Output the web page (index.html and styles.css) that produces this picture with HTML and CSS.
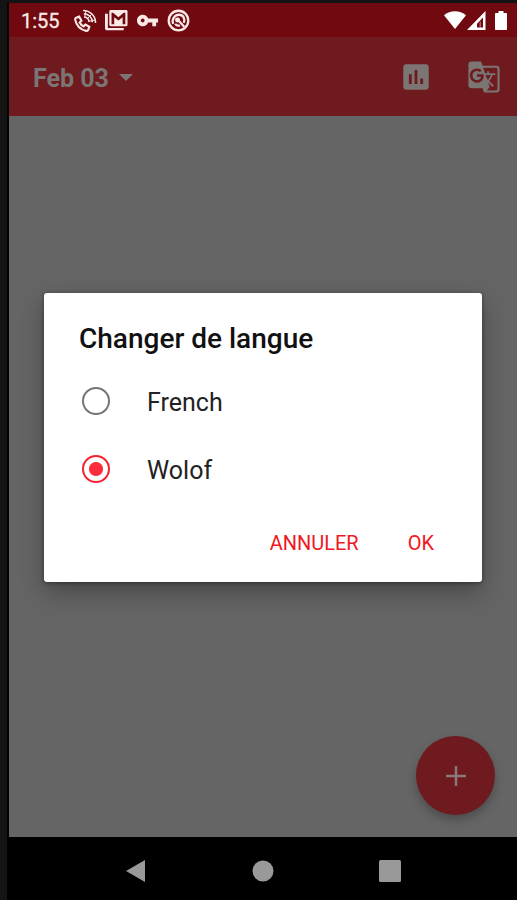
FILE: index.html
```html
<!DOCTYPE html>
<html lang="fr">
<head>
    <meta charset="UTF-8">
    <meta name="viewport" content="width=device-width, initial-scale=1.0">
    <title>Changer de langue</title>
    <link rel="stylesheet" href="styles.css">
</head>
<body>
    <div class="phone">
        <div class="status-bar">
            <span class="clock">1:55</span>
            <div class="notifications">
                <svg class="icon-call" viewBox="0 0 24 24">
                    <path class="line handset" d="M2.200 9.200 5.400 8l2.400 4.200-1.900 1.800c.9 1.800 2.300 3.200 4.100 4.100l1.900-1.900 4.100 2.400-1.200 3.200c-.3.800-1.200 1.200-2.100 1C6.800 21.400 2.400 17 1.300 11.300c-.2-.9.100-1.700.9-2.100z"/>
                    <path class="line" d="M9.500 1.500C16.800 1.500 22.500 7.200 22.500 14.500M10.300 5c5 .2 8.700 3.900 8.900 8.900M10.800 8.400c2.800.4 4.600 2.200 5 5"/>
                    <path class="line thin" d="M12.500 2 11 9M22 11.500l-7 1.500M18.500 5.500l-5 5"/>
                </svg>
                <svg class="icon-mail" viewBox="0 0 24 24">
                    <path d="M3 5H0v15c0 1.300.9 2.200 2.200 2.200H19.500v-2.500H3V5z"/>
                    <path fill-rule="evenodd" d="M6 1h16c.9 0 1.500.6 1.500 1.500v14c0 .9-.6 1.500-1.500 1.500H6c-.9 0-1.500-.6-1.500-1.500v-14C4.500 1.600 5.100 1 6 1zM6.800 4v12h2.800V8.500L14 12l4.400-3.500V16h2.800V4h-1.700L14 8.500 8.500 4z"/>
                </svg>
                <svg class="icon-key" viewBox="0 0 24 24">
                    <path d="M12.650 10C11.830 7.670 9.610 6 7 6c-3.310 0-6 2.690-6 6s2.690 6 6 6c2.610 0 4.830-1.670 5.650-4H17v4h4v-4h2v-4H12.650zM7 14c-1.100 0-2-.9-2-2s.9-2 2-2 2 .9 2 2-.9 2-2 2z"/>
                </svg>
                <svg class="icon-circle" viewBox="0 0 24 24">
                    <circle class="line thick" cx="12" cy="12" r="10.200"/>
                    <path class="line thick" d="M6.500 15.500C4.500 10 8.500 6 12.500 6c4.500 0 6.800 4.500 5 8.500M11 11l7 7.500M8.500 15.500c1.500 2 3.500 2 5 1.500"/>
                    <circle cx="11" cy="11.500" r="2.600"/>
                </svg>
            </div>
            <div class="signals">
                <svg class="icon-wifi" viewBox="0 0 22 18"><path d="M0 4.200C6-1.200 16-1.200 22 4.200L11 18z"/></svg>
                <svg class="icon-cell" viewBox="0 0 20 19"><path fill-rule="evenodd" d="M0 19 18.500 0v19zM10 16.500h6V6.500l-6 6.200z"/><path d="M12.500 11.500 14 10v6.500h-1.500z" opacity=".35"/></svg>
                <svg class="icon-battery" viewBox="0 0 12 19"><path d="M3.500 0h5v2H11c.6 0 1 .4 1 1v15c0 .6-.4 1-1 1H1c-.6 0-1-.4-1-1V3c0-.6.4-1 1-1h2.500z"/></svg>
            </div>
        </div>

        <div class="app-bar">
            <div class="date">Feb 03<span class="caret"></span></div>
            <div class="actions">
                <svg viewBox="0 0 24 24"><path d="M19 3H5c-1.100 0-2 .9-2 2v14c0 1.100.9 2 2 2h14c1.100 0 2-.9 2-2V5c0-1.100-.9-2-2-2zM9 17H7v-7h2v7zm4 0h-2V7h2v10zm4 0h-2v-4h2v4z"/></svg>
                <svg viewBox="0 0 24 24"><path d="M21 4H11l-1-3H3c-1.100 0-2 .9-2 2v15c0 1.100.9 2 2 2h8l1 3h9c1.100 0 2-.9 2-2V6c0-1.100-.9-2-2-2zM7 16c-2.760 0-5-2.240-5-5s2.240-5 5-5c1.350 0 2.480.5 3.350 1.300L9.030 8.570c-.38-.36-1.040-.78-2.030-.78-1.740 0-3.150 1.440-3.150 3.210S5.260 14.210 7 14.210c2.010 0 2.840-1.440 2.920-2.410v.01H7v-1.710h4.680c.07.31.12.61.12 1.020C11.800 13.970 9.890 16 7 16zm6.170-5.420h3.700c-.43 1.250-1.110 2.430-2.050 3.470-.31-.35-.6-.72-.86-1.100l-.79-2.370zm8.330 9.920c0 .55-.45 1-1 1H14l2-2.500-1.040-3.100 3.100 3.100.92-.92-3.300-3.250.02-.02c1.130-1.250 1.930-2.690 2.400-4.220H20v-1.300h-4.530V8h-1.290v1.290h-1.440L11.460 5.500h9.040c.55 0 1 .45 1 1v14z"/></svg>
            </div>
        </div>

        <div class="content">
            <div class="dialog">
                <div class="dialog-title">Changer de langue</div>
                <div class="option">
                    <span class="radio"></span>
                    <span class="label">French</span>
                </div>
                <div class="option">
                    <span class="radio checked"></span>
                    <span class="label">Wolof</span>
                </div>
                <div class="buttons">
                    <span class="btn">ANNULER</span>
                    <span class="btn">OK</span>
                </div>
            </div>
            <div class="fab">
                <svg viewBox="0 0 20 20"><path d="M0 10h20M10 0v20"/></svg>
            </div>
        </div>

        <div class="nav-bar">
            <svg viewBox="0 0 22 24"><path d="M1 12 20 1v22z"/></svg>
            <svg viewBox="0 0 22 24"><circle cx="11" cy="12" r="10.500"/></svg>
            <svg viewBox="0 0 22 24"><rect y="1" width="22" height="22" rx="1.500"/></svg>
        </div>
    </div>
</body>
</html>
```
FILE: styles.css
```css
*{padding: 0;margin: 0;box-sizing: border-box;}
html,body{
    width: 100%;
    height: 100%;
}
body{
    overflow: hidden;
    background-color: #141414;
    font-family: Roboto, "Liberation Sans", sans-serif;
}
svg{
    display: block;
    flex: none;
    fill: currentColor;
}
.phone{
    display: flex;
    flex-direction: column;
    height: 900px;
    padding: 3px 0 0 7px;
}
.status-bar,.app-bar,.content,.nav-bar{
    border-left: solid 2px #000;
}

/* status bar */
.status-bar{
    display: flex;
    align-items: center;
    height: 34px;
    padding: 0 10px 0 12px;
    background-color: #700a10;
    color: #fbe9e7;
}
.clock{
    width: 53px;
    font-size: 20px;
    line-height: 34px;
    padding-top: 2px;
    -webkit-text-stroke: .3px #fbe9e7;
}
.notifications{
    display: flex;
    align-items: center;
    gap: 8px;
}
.line{
    fill: none;
    stroke: currentColor;
    stroke-width: 1.6;
}
.handset{
    stroke-width: 2.2;
}
.thick{
    stroke-width: 2.4;
}
.thin{
    stroke-width: 1;
}
.icon-call,.icon-mail,.icon-key,.icon-circle{
    width: 23px;
    height: 23px;
}
.signals{
    display: flex;
    align-items: center;
    margin-left: auto;
    color: #fff;
}
.icon-wifi{
    width: 22px;
    height: 18px;
}
.icon-cell{
    width: 20px;
    height: 19px;
    margin: 0 8px 0 1px;
}
.icon-battery{
    width: 12px;
    height: 19px;
}

/* app bar */
.app-bar{
    display: flex;
    align-items: center;
    justify-content: space-between;
    height: 79px;
    padding: 0 16px 0 24px;
    background-color: #6e1a1e;
    color: #7b7573;
}
.date{
    display: flex;
    align-items: center;
    padding-top: 3px;
    font-size: 25px;
    font-weight: 700;
}
.caret{
    margin: 0 0 2px 10px;
    border: solid 7px transparent;
    border-top-color: #7b7573;
    border-bottom: 0;
}
.actions{
    display: flex;
    gap: 34px;
}
.actions svg{
    width: 34px;
    height: 34px;
}

/* content and dialog */
.content{
    position: relative;
    height: 721px;
    padding: 177px 35px 0;
    background-color: #656565;
}
.dialog{
    height: 289px;
    padding: 29px 35px 0;
    border-radius: 3px;
    background-color: #fff;
    box-shadow: 0 10px 26px rgba(0,0,0,.3), 0 1px 4px rgba(0,0,0,.4);
}
.dialog-title{
    height: 45px;
    font-size: 28px;
    font-weight: 500;
    line-height: 34px;
    letter-spacing: 0;
    color: #111;
}
.option{
    display: flex;
    align-items: center;
    height: 68px;
    padding-left: 3px;
    font-size: 25px;
    color: #222;
}
.label{
    padding-top: 2px;
}
.radio{
    width: 28px;
    height: 28px;
    margin-right: 37px;
    border: solid 2.5px #757575;
    border-radius: 50%;
}
.radio.checked{
    border-color: #f32432;
    background: radial-gradient(circle, #fb2c3c 6.5px, #fff 7.5px);
}
.buttons{
    display: flex;
    justify-content: flex-end;
    gap: 49px;
    padding: 28px 13px 0 0;
}
.btn{
    font-size: 20px;
    line-height: 24px;
    color: #f01822;
}
.fab{
    position: absolute;
    right: 22px;
    bottom: 22px;
    display: flex;
    align-items: center;
    justify-content: center;
    width: 79px;
    height: 79px;
    border-radius: 50%;
    background-color: #6e1a1e;
    box-shadow: 0 5px 10px rgba(0,0,0,.25);
}
.fab svg{
    width: 20px;
    height: 20px;
    stroke: #8e7a7a;
    stroke-width: 2.4;
}

/* navigation buttons */
.nav-bar{
    display: flex;
    align-items: center;
    justify-content: space-between;
    height: 63px;
    padding: 5px 116px 0 116px;
    background-color: #000;
    color: #999;
}
.nav-bar svg{
    width: 22px;
    height: 24px;
}
```
